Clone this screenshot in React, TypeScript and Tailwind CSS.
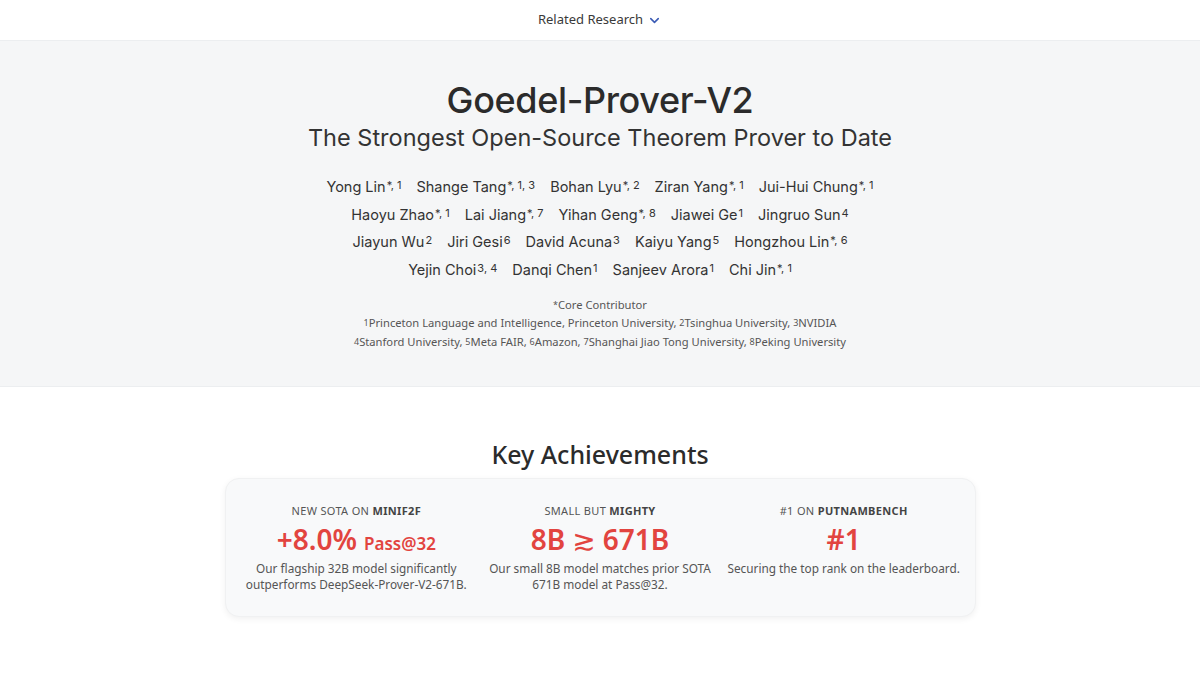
import React from "react";
import { ChevronDown } from "lucide-react";

const authors: [string, string][][] = [
  [
    ["Yong Lin", "*, 1"],
    ["Shange Tang", "*, 1, 3"],
    ["Bohan Lyu", "*, 2"],
    ["Ziran Yang", "*, 1"],
    ["Jui-Hui Chung", "*, 1"],
  ],
  [
    ["Haoyu Zhao", "*, 1"],
    ["Lai Jiang", "*, 7"],
    ["Yihan Geng", "*, 8"],
    ["Jiawei Ge", "1"],
    ["Jingruo Sun", "4"],
  ],
  [
    ["Jiayun Wu", "2"],
    ["Jiri Gesi", "6"],
    ["David Acuna", "3"],
    ["Kaiyu Yang", "5"],
    ["Hongzhou Lin", "*, 6"],
  ],
  [
    ["Yejin Choi", "3, 4"],
    ["Danqi Chen", "1"],
    ["Sanjeev Arora", "1"],
    ["Chi Jin", "*, 1"],
  ],
];

const Sup = ({ children }: { children: React.ReactNode }) => (
  <sup className="text-[11px] ml-[1px] relative -top-[3px]">{children}</sup>
);

const Fn = ({ children }: { children: React.ReactNode }) => (
  <sup className="text-[9px] relative -top-[1px]">{children}</sup>
);

const Card = ({
  label,
  strong,
  big,
  desc,
}: {
  label: string;
  strong: string;
  big: React.ReactNode;
  desc: React.ReactNode;
}) => (
  <div className="flex flex-col items-center text-center">
    <div className="text-[11px] leading-[16px] tracking-[0.03em] text-[#555] uppercase">
      {label} <span className="font-bold text-[#444]">{strong}</span>
    </div>
    <div className="mt-[4px] h-[32px] flex items-baseline justify-center gap-[7px] text-[28px] leading-[32px] font-semibold text-[#e2443f]">
      {big}
    </div>
    <div className="text-[11.8px] leading-[16px] text-[#555] mt-[5px]">{desc}</div>
  </div>
);

export default function App() {
  return (
    <div className="min-h-screen bg-white font-['Noto_Sans',sans-serif]">
      <header className="h-[41px] flex items-center justify-center gap-[4px] border-b border-[#eceef0] bg-white">
        <span className="text-[13px] text-[#3a3a3a]">Related Research</span>
        <ChevronDown className="size-[15px] text-[#3b5bb5]" strokeWidth={2.5} />
      </header>

      <section className="bg-[#f5f6f7] h-[346px] flex flex-col items-center pt-[37px] border-b border-[#eceef0]">
        <h1 className="font-['Inter',sans-serif] text-[36px] leading-[44px] font-medium text-[#2b2b2b] tracking-[-0.01em]">
          Goedel-Prover-V2
        </h1>
        <h2 className="font-['Inter',sans-serif] text-[23.5px] leading-[30px] text-[#333] mt-[1px]">
          The Strongest Open-Source Theorem Prover to Date
        </h2>
        <div className="mt-[20px] font-['Inter',sans-serif] text-[14.5px] leading-[27.7px] text-[#333]">
          {authors.map((row, i) => (
            <div key={i} className="flex justify-center gap-[15px]">
              {row.map(([name, sup]) => (
                <span key={name}>
                  {name}
                  <Sup>{sup}</Sup>
                </span>
              ))}
            </div>
          ))}
        </div>
        <div className="mt-[12px] text-[11.2px] leading-[18.5px] text-[#555] text-center">
          <div>
            <Fn>*</Fn>Core Contributor
          </div>
          <div>
            <Fn>1</Fn>Princeton Language and Intelligence, Princeton University, <Fn>2</Fn>Tsinghua University,{" "}
            <Fn>3</Fn>NVIDIA
          </div>
          <div>
            <Fn>4</Fn>Stanford University, <Fn>5</Fn>Meta FAIR, <Fn>6</Fn>Amazon, <Fn>7</Fn>Shanghai Jiao Tong
            University, <Fn>8</Fn>Peking University
          </div>
        </div>
      </section>

      <section className="flex flex-col items-center pt-[50px]">
        <h2 className="text-[25px] leading-[34px] font-medium text-[#2b2b2b]">Key Achievements</h2>
        <div className="mt-[7px] w-[751px] h-[139px] rounded-[14px] bg-[#f8f9fa] shadow-[0_2px_6px_rgba(0,0,0,0.06)] border border-[#f0f1f2] grid grid-cols-3 items-start px-[9px] pt-[24px]">
          <Card
            label="New SOTA on"
            strong="MINIF2F"
            big={
              <>
                <span>+8.0%</span>
                <span className="text-[17px] leading-none">Pass@32</span>
              </>
            }
            desc={
              <>
                Our flagship 32B model significantly
                <br />
                outperforms DeepSeek-Prover-V2-671B.
              </>
            }
          />
          <Card
            label="Small but"
            strong="MIGHTY"
            big={
              <>
                8B <span className="font-['DejaVu_Sans',sans-serif] font-normal">≳</span> 671B
              </>
            }
            desc={
              <>
                Our small 8B model matches prior SOTA
                <br />
                671B model at Pass@32.
              </>
            }
          />
          <Card label="#1 on" strong="PUTNAMBENCH" big={<>#1</>} desc={<>Securing the top rank on the leaderboard.</>} />
        </div>
      </section>
    </div>
  );
}
